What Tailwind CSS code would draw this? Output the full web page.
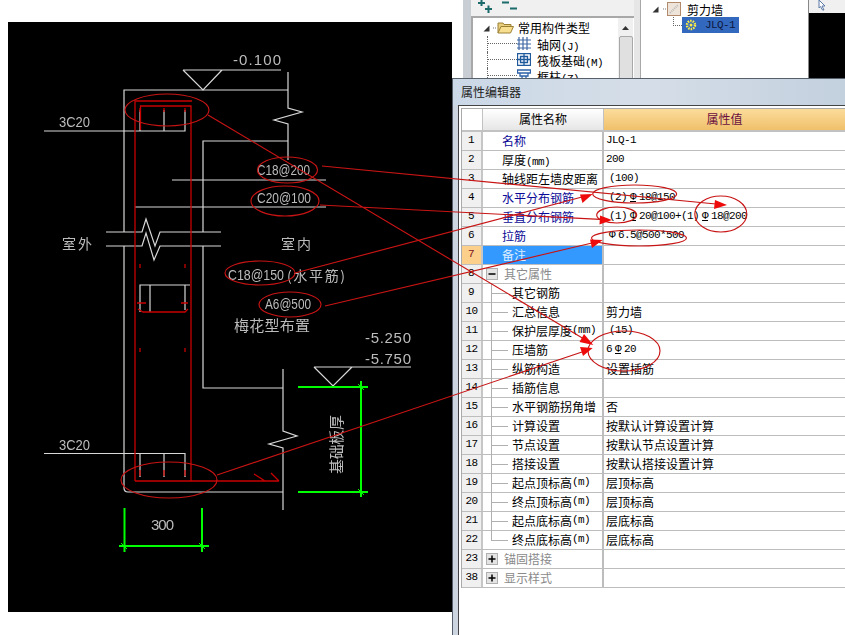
<!DOCTYPE html>
<html lang="zh">
<head>
<meta charset="utf-8">
<script src="https://cdn.jsdelivr.net/npm/@tailwindcss/browser@4"></script>
<title>属性编辑器</title>
</head>
<body class="relative w-[845px] h-[635px] overflow-hidden bg-white font-['Noto_Sans_CJK_SC','Liberation_Sans',sans-serif] text-[12px] leading-[17px] text-black">

<!-- CAD drawing -->
<svg class="absolute left-0 top-0 blur-[0.3px]" width="452" height="635" viewBox="0 0 452 635" fill="none">
  <rect x="8" y="22" width="444" height="590" fill="#000"/>
  <g stroke="#d8d8d8" stroke-width="1.2">
    <path d="M183 70H281M183 70L203 90L222 70"/>
    <path d="M288 72V108L302 112L274 120L288 124V160"/>
    <path d="M124 232V90H288"/>
    <path d="M124 246V488Q124 492 128 492H283"/>
    <path d="M288 141H203V232M203 246V388H283"/>
    <path d="M283 369V431L297 436L269 444L283 448V510"/>
    <path d="M106 232H142L146 219L155 246L160 232H221"/>
    <path d="M106 246H142L146 233L154 260L160 246H221"/>
    <path d="M172 180H326M135 207H326"/>
    <path d="M44 131H185V110M140 131V110M164 131V110"/>
    <path d="M44 453.500H185V477M140 453.500V477M164 453.500V477"/>
    <path d="M140 312V285H190M150 285V312M185 285V310"/>
    <path d="M314 367H411M314 367L333 386L352 367"/>
  </g>
  <g stroke="#c80000" stroke-width="1.300">
    <path d="M135 481V101H192M140.500 130V106H191V481M135 481H279M254 474L265 481M271 473L279 481"/>
    <path d="M138 309L143 312H185L188 309M137 303H146M181 303H188"/>
    <path d="M140 264V268M185 264V268M140 348V352M185 348V352M140 108V112M164 108V112M185 108V112M140 470V476M164 470V476M185 470V476"/>
  </g>
  <g stroke="#00ff00" stroke-width="2">
    <path d="M298 387H368M298 492H368M361 381V497"/>
    <path d="M124.500 508V552M202 508V552M119 546H209"/>
    <path d="M358 384L364 390M358 489L364 495M121 543L127 549M199 543L205 549" stroke-width="1"/>
  </g>
  <g fill="#bcbcbc" font-family="'Liberation Sans','Noto Sans CJK SC',sans-serif" font-size="15">
    <text x="233" y="65" textLength="48">-0.100</text>
    <text x="59" y="127" textLength="31" lengthAdjust="spacingAndGlyphs">3C20</text>
    <text x="59" y="450" textLength="31" lengthAdjust="spacingAndGlyphs">3C20</text>
    <text x="257" y="175" textLength="53" lengthAdjust="spacingAndGlyphs">C18@200</text>
    <text x="257" y="203" textLength="54" lengthAdjust="spacingAndGlyphs">C20@100</text>
    <text x="228" y="280" textLength="56" lengthAdjust="spacingAndGlyphs">C18@150</text>
    <text x="287" y="281" font-size="14" font-family="'Noto Sans CJK SC',sans-serif" textLength="58">(水平筋)</text>
    <text x="265" y="309" textLength="46" lengthAdjust="spacingAndGlyphs">A6@500</text>
    <text x="62" y="249" font-size="14" letter-spacing="2" font-family="'Noto Sans CJK SC',sans-serif">室外</text>
    <text x="281" y="249" font-size="14" letter-spacing="2" font-family="'Noto Sans CJK SC',sans-serif">室内</text>
    <text x="234" y="331" font-size="15" font-family="'Noto Sans CJK SC',sans-serif" textLength="76">梅花型布置</text>
    <text x="365" y="343" textLength="46">-5.250</text>
    <text x="365" y="364" textLength="46">-5.750</text>
    <text x="151" y="530" textLength="23">300</text>
    <text transform="translate(342 474) rotate(-90)" font-size="15" font-family="'Noto Sans CJK SC',sans-serif" textLength="59">基础板厚</text>
  </g>
</svg>

<!-- background tree windows -->
<div class="absolute left-[463px] top-0 w-[382px] h-[80px] flex bg-[#e6e6e6]">
  <div class="w-[171px] h-full flex flex-col border-l-[8px] border-[#c9ced4]">
    <div class="h-[18px] bg-[#f0f0f0] border-b-2 border-[#a8a8a8] flex items-start pl-[6px] gap-[7px]">
      <svg width="17" height="14" viewBox="0 0 17 14" fill="none" stroke="#1b6b6b" stroke-width="2"><path d="M1 3H8M4.500 0V6M8 9H15M11.500 5.500V13"/></svg>
      <svg width="17" height="14" viewBox="0 0 17 14" fill="none" stroke="#1b6b6b" stroke-width="2"><path d="M1 2.500H8M9 8.500H16"/></svg>
    </div>
    <div class="flex-1 flex bg-white border-l-2 border-[#a8a8a8] overflow-hidden">
      <div class="flex-1 flex flex-col pt-[1px] pl-[10px]">
        <div class="flex items-center h-[17px]">
          <svg width="7" height="7" viewBox="0 0 7 7" class="mr-[3px] mt-[2px]"><path d="M6.500 0.500V6.500H0.500Z" fill="#333"/></svg>
          <svg width="3" height="2" class="mr-[1px]"><path d="M0 1H3" stroke="#777" stroke-dasharray="1 1"/></svg>
          <svg width="17" height="13" viewBox="0 0 17 13" class="mr-[4px]"><path d="M1 12V2H6L7 3.500H14V6" fill="#e8cf7e" stroke="#9c8034"/><path d="M1 12L4 5.500H16.500L13.500 12Z" fill="#f8df90" stroke="#9c8034"/></svg>
          <span>常用构件类型</span>
        </div>
        <div class="flex h-[16px] pl-[4px]">
          <div class="w-[30px] h-[16px] border-l border-dotted border-[#666]"><div class="h-[8px] border-b border-dotted border-[#666]"></div></div>
          <svg width="14" height="13" viewBox="0 0 14 13" class="mr-[6px] mt-[1px]" fill="none" stroke="#3f67a6" stroke-width="1.200"><path d="M2 0V13M6 0V13M10 0V13M0 3H14M0 7H14M0 11H14"/></svg>
          <span>轴网<span class="font-['Liberation_Mono'] text-[11px] tracking-[-0.6px]">(J)</span></span>
        </div>
        <div class="flex h-[16px] pl-[4px]">
          <div class="w-[30px] h-[16px] border-l border-dotted border-[#666]"><div class="h-[8px] border-b border-dotted border-[#666]"></div></div>
          <svg width="14" height="13" viewBox="0 0 14 13" class="mr-[6px] mt-[1px]" fill="none" stroke="#1f5a9c" stroke-width="1.300"><path d="M0.500 0.500H13.500V12.500H0.500ZM3.500 3.500H10.500V9.500H3.500ZM0.500 6.500H13.500M7 0.500V12.500"/></svg>
          <span>筏板基础<span class="font-['Liberation_Mono'] text-[11px] tracking-[-0.6px]">(M)</span></span>
        </div>
        <div class="flex h-[16px] pl-[4px]">
          <div class="w-[30px] h-[16px] border-l border-dotted border-[#666]"><div class="h-[8px] border-b border-dotted border-[#666]"></div></div>
          <svg width="14" height="13" viewBox="0 0 14 13" class="mr-[6px] mt-[1px]" fill="none" stroke="#2d62a8" stroke-width="1.300"><path d="M0.500 1H13.500V4H0.500ZM3 4V7H11V4M5 7V13M9 7V13"/></svg>
          <span>框柱<span class="font-['Liberation_Mono'] text-[11px] tracking-[-0.6px]">(Z)</span></span>
        </div>
      </div>
      <div class="w-[15px] h-full bg-[#f0f0f0] flex flex-col items-center pt-[8px] gap-[6px] mr-[1px]">
        <svg width="7" height="4" viewBox="0 0 7 4"><path d="M0 4H7L3.500 0Z" fill="#333"/></svg>
        <div class="w-[14px] flex-1 bg-[#e0e0e0] border border-[#a8a8a8] rounded-[2px]"></div>
      </div>
    </div>
  </div>
  <div class="w-[6px] h-full"></div>
  <div class="w-[168px] h-full bg-white border-l border-[#a8a8a8] pl-[11px] pt-0 flex flex-col">
    <div class="flex items-center h-[17px] pt-[1px]">
      <svg width="7" height="7" viewBox="0 0 7 7" class="mr-[4px]"><path d="M6.500 0.500V6.500H0.500Z" fill="#333"/></svg>
      <svg width="3" height="2" class="mr-[1px]"><path d="M0 1H3" stroke="#777" stroke-dasharray="1 1"/></svg>
      <svg width="15" height="14" viewBox="0 0 15 14" class="mr-[5px]"><rect x="0.500" y="0.500" width="13" height="13" fill="#eee4da" stroke="#b08a6a"/><path d="M3 11L11 3" stroke="#bbb" stroke-width="2" stroke-dasharray="1 1"/></svg>
      <span class="text-[12px]">剪力墙</span>
    </div>
    <div class="flex h-[16px] ml-[21px]">
      <div class="w-[9px] h-[9px] border-l border-b border-dotted border-[#666]"></div>
      <div class="flex items-center w-[57px] bg-[#3268bd]">
        <svg width="12" height="12" viewBox="0 0 12 12" class="ml-[3px] mr-[8px]"><circle cx="6" cy="6" r="4" fill="none" stroke="#ffee44" stroke-width="2.500" stroke-dasharray="1.500 1"/><circle cx="6" cy="6" r="1.500" fill="#ffee44"/></svg>
        <span class="font-['Liberation_Mono'] text-[11px] tracking-[-0.6px] text-[#0d1840]">JLQ-1</span>
      </div>
    </div>
  </div>
  <div class="flex-1 h-full flex flex-col border-l border-[#888]">
    <div class="h-[13px] bg-[#f0f0f0] flex items-start pl-[8px]">
      <svg width="10" height="11" viewBox="0 0 10 11"><path d="M2 0L8 6H5L7 10H5.500L3.500 6.500L2 8Z" fill="#fff" stroke="#5c7ba8"/></svg>
    </div>
    <div class="flex-1 bg-black"></div>
  </div>
</div>

<!-- property editor window -->
<div class="absolute left-[452px] top-[78px] w-[393px] h-[557px] flex flex-col bg-white border-l border-t border-[#55606a]">
  <div class="h-[26px] shrink-0 flex items-center pl-[8px] pb-[2px] bg-gradient-to-r from-[#cbd8e7] via-[#d5dee8] to-[#c3d0de] text-[#222]">属性编辑器</div>
  <div class="flex-1 flex bg-[#cdd6e0] pl-[5px]">
    <div class="flex-1 flex flex-col bg-white border-l border-t border-[#444] pl-[2px] pt-[2px]">
      <div class="border-l border-t border-[#aaa] flex flex-col">
        <div class="flex h-[23px] border-b-2 border-[#c2c2c2]">
          <div class="w-[21px] bg-white border-r border-[#c2c2c2]"></div>
          <div class="w-[121px] text-center bg-gradient-to-b from-white to-[#e6e6e6] border-r border-[#c2c2c2] leading-[19px]">属性名称</div>
          <div class="flex-1 text-center bg-gradient-to-b from-[#fbdc9b] to-[#f0c06a] text-[#6a1040] leading-[19px]">属性值</div>
        </div>
        <div class="flex h-[19px] border-b border-[#bdbdbd]"><div class="w-[21px] text-center bg-[#f0f0f0] border-r-2 border-[#c6c6c6] font-['Liberation_Mono'] text-[11px] tracking-[-0.6px] pr-[1px]">1</div><div class="w-[121px] pl-[19px] border-r-2 border-[#bdbdbd] text-[#0a0a96]">名称</div><div class="flex-1 pl-[2px] font-['Liberation_Mono'] text-[11px] tracking-[-0.6px]">JLQ-1</div></div>
        <div class="flex h-[19px] border-b border-[#bdbdbd]"><div class="w-[21px] text-center bg-[#f0f0f0] border-r-2 border-[#c6c6c6] font-['Liberation_Mono'] text-[11px] tracking-[-0.6px] pr-[1px]">2</div><div class="w-[121px] pl-[19px] border-r-2 border-[#bdbdbd]">厚度<span class="font-['Liberation_Mono'] text-[11px] tracking-[-0.6px]">(mm)</span></div><div class="flex-1 pl-[2px] font-['Liberation_Mono'] text-[11px] tracking-[-0.6px]">200</div></div>
        <div class="flex h-[19px] border-b border-[#bdbdbd]"><div class="w-[21px] text-center bg-[#f0f0f0] border-r-2 border-[#c6c6c6] font-['Liberation_Mono'] text-[11px] tracking-[-0.6px] pr-[1px]">3</div><div class="w-[121px] pl-[19px] border-r-2 border-[#bdbdbd]">轴线距左墙皮距离</div><div class="flex-1 pl-[5px] font-['Liberation_Mono'] text-[11px] tracking-[-0.6px]">(100)</div></div>
        <div class="flex h-[19px] border-b border-[#bdbdbd]"><div class="w-[21px] text-center bg-[#f0f0f0] border-r-2 border-[#c6c6c6] font-['Liberation_Mono'] text-[11px] tracking-[-0.6px] pr-[1px]">4</div><div class="w-[121px] pl-[19px] border-r-2 border-[#bdbdbd] text-[#0a0a96]">水平分布钢筋</div><div class="flex-1 pl-[5px] font-['Liberation_Mono'] text-[11px] tracking-[-0.6px]">(2)<span class="inline-block w-[12px] text-center underline">Φ</span>18@150</div></div>
        <div class="flex h-[19px] border-b border-[#bdbdbd]"><div class="w-[21px] text-center bg-[#f0f0f0] border-r-2 border-[#c6c6c6] font-['Liberation_Mono'] text-[11px] tracking-[-0.6px] pr-[1px]">5</div><div class="w-[121px] pl-[19px] border-r-2 border-[#bdbdbd] text-[#0a0a96]">垂直分布钢筋</div><div class="flex-1 pl-[5px] font-['Liberation_Mono'] text-[11px] tracking-[-0.6px]">(1)<span class="inline-block w-[12px] text-center underline">Φ</span>20@100+(1)<span class="inline-block w-[12px] text-center underline">Φ</span>18@200</div></div>
        <div class="flex h-[19px] border-b border-[#bdbdbd]"><div class="w-[21px] text-center bg-[#f0f0f0] border-r-2 border-[#c6c6c6] font-['Liberation_Mono'] text-[11px] tracking-[-0.6px] pr-[1px]">6</div><div class="w-[121px] pl-[19px] border-r-2 border-[#bdbdbd] text-[#0a0a96]">拉筋</div><div class="flex-1 pl-[2px] font-['Liberation_Mono'] text-[11px] tracking-[-0.6px]"><span class="inline-block w-[12px] text-center">Φ</span>6.5@500*500</div></div>
        <div class="flex h-[19px] border-b border-[#bdbdbd]"><div class="w-[21px] text-center bg-[#fcd08a] border-r-2 border-[#c6c6c6] text-[#7a1020] font-['Liberation_Mono'] text-[11px] tracking-[-0.6px] pr-[1px]">7</div><div class="w-[121px] pl-[19px] border-r-2 border-[#bdbdbd] bg-[#3399ff] text-[#dfeeff]">备注</div><div class="flex-1"></div></div>
        <div class="flex h-[19px] border-b border-[#bdbdbd]"><div class="w-[21px] text-center bg-[#f0f0f0] border-r-2 border-[#c6c6c6] font-['Liberation_Mono'] text-[11px] tracking-[-0.6px] pr-[1px]">8</div><div class="w-[121px] pl-[3px] flex items-start pt-[1px] gap-[6px] border-r-2 border-[#bdbdbd] text-[#8a8a8a]"><svg class="mt-[2px]" width="12" height="12" viewBox="0 0 12 12" fill="none"><rect x="0.500" y="0.500" width="11" height="11" fill="#e4e4e4" stroke="#b0b0b0"/><path d="M2.500 6H9.500" stroke="#000" stroke-width="1.500"/></svg><span class="-mt-[1px]">其它属性</span></div><div class="flex-1"></div></div>
        <div class="flex h-[19px] border-b border-[#bdbdbd]"><div class="w-[21px] text-center bg-[#f0f0f0] border-r-2 border-[#c6c6c6] font-['Liberation_Mono'] text-[11px] tracking-[-0.6px] pr-[1px]">9</div><div class="w-[121px] flex border-r-2 border-[#bdbdbd]"><div class="ml-[8px] w-[17px] h-[19px] border-l border-[#b0b0b0] mr-[4px]"><div class="h-[10px] border-b border-[#b0b0b0]"></div></div>其它钢筋</div><div class="flex-1"></div></div>
        <div class="flex h-[19px] border-b border-[#bdbdbd]"><div class="w-[21px] text-center bg-[#f0f0f0] border-r-2 border-[#c6c6c6] font-['Liberation_Mono'] text-[11px] tracking-[-0.6px]">10</div><div class="w-[121px] flex border-r-2 border-[#bdbdbd]"><div class="ml-[8px] w-[17px] h-[19px] border-l border-[#b0b0b0] mr-[4px]"><div class="h-[10px] border-b border-[#b0b0b0]"></div></div>汇总信息</div><div class="flex-1 pl-[2px]">剪力墙</div></div>
        <div class="flex h-[19px] border-b border-[#bdbdbd]"><div class="w-[21px] text-center bg-[#f0f0f0] border-r-2 border-[#c6c6c6] font-['Liberation_Mono'] text-[11px] tracking-[-0.6px]">11</div><div class="w-[121px] flex border-r-2 border-[#bdbdbd]"><div class="ml-[8px] w-[17px] h-[19px] border-l border-[#b0b0b0] mr-[4px]"><div class="h-[10px] border-b border-[#b0b0b0]"></div></div>保护层厚度<span class="font-['Liberation_Mono'] text-[11px] tracking-[-0.6px]">(mm)</span></div><div class="flex-1 pl-[5px] font-['Liberation_Mono'] text-[11px] tracking-[-0.6px]">(15)</div></div>
        <div class="flex h-[19px] border-b border-[#bdbdbd]"><div class="w-[21px] text-center bg-[#f0f0f0] border-r-2 border-[#c6c6c6] font-['Liberation_Mono'] text-[11px] tracking-[-0.6px]">12</div><div class="w-[121px] flex border-r-2 border-[#bdbdbd]"><div class="ml-[8px] w-[17px] h-[19px] border-l border-[#b0b0b0] mr-[4px]"><div class="h-[10px] border-b border-[#b0b0b0]"></div></div>压墙筋</div><div class="flex-1 pl-[2px] font-['Liberation_Mono'] text-[11px] tracking-[-0.6px]">6<span class="inline-block w-[12px] text-center underline">Φ</span>20</div></div>
        <div class="flex h-[19px] border-b border-[#bdbdbd]"><div class="w-[21px] text-center bg-[#f0f0f0] border-r-2 border-[#c6c6c6] font-['Liberation_Mono'] text-[11px] tracking-[-0.6px]">13</div><div class="w-[121px] flex border-r-2 border-[#bdbdbd]"><div class="ml-[8px] w-[17px] h-[19px] border-l border-[#b0b0b0] mr-[4px]"><div class="h-[10px] border-b border-[#b0b0b0]"></div></div>纵筋构造</div><div class="flex-1 pl-[2px]">设置插筋</div></div>
        <div class="flex h-[19px] border-b border-[#bdbdbd]"><div class="w-[21px] text-center bg-[#f0f0f0] border-r-2 border-[#c6c6c6] font-['Liberation_Mono'] text-[11px] tracking-[-0.6px]">14</div><div class="w-[121px] flex border-r-2 border-[#bdbdbd]"><div class="ml-[8px] w-[17px] h-[19px] border-l border-[#b0b0b0] mr-[4px]"><div class="h-[10px] border-b border-[#b0b0b0]"></div></div>插筋信息</div><div class="flex-1"></div></div>
        <div class="flex h-[19px] border-b border-[#bdbdbd]"><div class="w-[21px] text-center bg-[#f0f0f0] border-r-2 border-[#c6c6c6] font-['Liberation_Mono'] text-[11px] tracking-[-0.6px]">15</div><div class="w-[121px] flex border-r-2 border-[#bdbdbd]"><div class="ml-[8px] w-[17px] h-[19px] border-l border-[#b0b0b0] mr-[4px]"><div class="h-[10px] border-b border-[#b0b0b0]"></div></div>水平钢筋拐角增</div><div class="flex-1 pl-[2px]">否</div></div>
        <div class="flex h-[19px] border-b border-[#bdbdbd]"><div class="w-[21px] text-center bg-[#f0f0f0] border-r-2 border-[#c6c6c6] font-['Liberation_Mono'] text-[11px] tracking-[-0.6px]">16</div><div class="w-[121px] flex border-r-2 border-[#bdbdbd]"><div class="ml-[8px] w-[17px] h-[19px] border-l border-[#b0b0b0] mr-[4px]"><div class="h-[10px] border-b border-[#b0b0b0]"></div></div>计算设置</div><div class="flex-1 pl-[2px]">按默认计算设置计算</div></div>
        <div class="flex h-[19px] border-b border-[#bdbdbd]"><div class="w-[21px] text-center bg-[#f0f0f0] border-r-2 border-[#c6c6c6] font-['Liberation_Mono'] text-[11px] tracking-[-0.6px]">17</div><div class="w-[121px] flex border-r-2 border-[#bdbdbd]"><div class="ml-[8px] w-[17px] h-[19px] border-l border-[#b0b0b0] mr-[4px]"><div class="h-[10px] border-b border-[#b0b0b0]"></div></div>节点设置</div><div class="flex-1 pl-[2px]">按默认节点设置计算</div></div>
        <div class="flex h-[19px] border-b border-[#bdbdbd]"><div class="w-[21px] text-center bg-[#f0f0f0] border-r-2 border-[#c6c6c6] font-['Liberation_Mono'] text-[11px] tracking-[-0.6px]">18</div><div class="w-[121px] flex border-r-2 border-[#bdbdbd]"><div class="ml-[8px] w-[17px] h-[19px] border-l border-[#b0b0b0] mr-[4px]"><div class="h-[10px] border-b border-[#b0b0b0]"></div></div>搭接设置</div><div class="flex-1 pl-[2px]">按默认搭接设置计算</div></div>
        <div class="flex h-[19px] border-b border-[#bdbdbd]"><div class="w-[21px] text-center bg-[#f0f0f0] border-r-2 border-[#c6c6c6] font-['Liberation_Mono'] text-[11px] tracking-[-0.6px]">19</div><div class="w-[121px] flex border-r-2 border-[#bdbdbd]"><div class="ml-[8px] w-[17px] h-[19px] border-l border-[#b0b0b0] mr-[4px]"><div class="h-[10px] border-b border-[#b0b0b0]"></div></div>起点顶标高<span class="font-['Liberation_Mono'] text-[11px] tracking-[-0.6px]">(m)</span></div><div class="flex-1 pl-[2px]">层顶标高</div></div>
        <div class="flex h-[19px] border-b border-[#bdbdbd]"><div class="w-[21px] text-center bg-[#f0f0f0] border-r-2 border-[#c6c6c6] font-['Liberation_Mono'] text-[11px] tracking-[-0.6px]">20</div><div class="w-[121px] flex border-r-2 border-[#bdbdbd]"><div class="ml-[8px] w-[17px] h-[19px] border-l border-[#b0b0b0] mr-[4px]"><div class="h-[10px] border-b border-[#b0b0b0]"></div></div>终点顶标高<span class="font-['Liberation_Mono'] text-[11px] tracking-[-0.6px]">(m)</span></div><div class="flex-1 pl-[2px]">层顶标高</div></div>
        <div class="flex h-[19px] border-b border-[#bdbdbd]"><div class="w-[21px] text-center bg-[#f0f0f0] border-r-2 border-[#c6c6c6] font-['Liberation_Mono'] text-[11px] tracking-[-0.6px]">21</div><div class="w-[121px] flex border-r-2 border-[#bdbdbd]"><div class="ml-[8px] w-[17px] h-[19px] border-l border-[#b0b0b0] mr-[4px]"><div class="h-[10px] border-b border-[#b0b0b0]"></div></div>起点底标高<span class="font-['Liberation_Mono'] text-[11px] tracking-[-0.6px]">(m)</span></div><div class="flex-1 pl-[2px]">层底标高</div></div>
        <div class="flex h-[19px] border-b border-[#bdbdbd]"><div class="w-[21px] text-center bg-[#f0f0f0] border-r-2 border-[#c6c6c6] font-['Liberation_Mono'] text-[11px] tracking-[-0.6px]">22</div><div class="w-[121px] flex border-r-2 border-[#bdbdbd]"><div class="ml-[8px] w-[17px] h-[10px] border-l border-b border-[#b0b0b0] mr-[4px]"></div>终点底标高<span class="font-['Liberation_Mono'] text-[11px] tracking-[-0.6px]">(m)</span></div><div class="flex-1 pl-[2px]">层底标高</div></div>
        <div class="flex h-[19px] border-b border-[#bdbdbd]"><div class="w-[21px] text-center bg-[#f0f0f0] border-r-2 border-[#c6c6c6] font-['Liberation_Mono'] text-[11px] tracking-[-0.6px]">23</div><div class="w-[121px] pl-[3px] flex items-start pt-[1px] gap-[6px] border-r-2 border-[#bdbdbd] text-[#8a8a8a]"><svg class="mt-[2px]" width="12" height="12" viewBox="0 0 12 12" fill="none"><rect x="0.500" y="0.500" width="11" height="11" fill="#e4e4e4" stroke="#b0b0b0"/><path d="M2.500 6H9.500M6 2.500V9.500" stroke="#000" stroke-width="1.500"/></svg><span class="-mt-[1px]">锚固搭接</span></div><div class="flex-1"></div></div>
        <div class="flex h-[19px] border-b border-[#bdbdbd]"><div class="w-[21px] text-center bg-[#f0f0f0] border-r-2 border-[#c6c6c6] font-['Liberation_Mono'] text-[11px] tracking-[-0.6px]">38</div><div class="w-[121px] pl-[3px] flex items-start pt-[1px] gap-[6px] border-r-2 border-[#bdbdbd] text-[#8a8a8a]"><svg class="mt-[2px]" width="12" height="12" viewBox="0 0 12 12" fill="none"><rect x="0.500" y="0.500" width="11" height="11" fill="#e4e4e4" stroke="#b0b0b0"/><path d="M2.500 6H9.500M6 2.500V9.500" stroke="#000" stroke-width="1.500"/></svg><span class="-mt-[1px]">显示样式</span></div><div class="flex-1"></div></div>
      </div>
    </div>
  </div>
</div>

<!-- red annotations over everything -->
<svg class="absolute left-0 top-0 pointer-events-none" width="845" height="635" viewBox="0 0 845 635" fill="none">
  <g stroke="#c81414" stroke-width="1.150">
    <ellipse cx="167" cy="110" rx="42" ry="16"/>
    <ellipse cx="287.500" cy="170" rx="30" ry="13"/>
    <ellipse cx="285" cy="201" rx="34" ry="15"/>
    <ellipse cx="260" cy="273" rx="35" ry="12"/>
    <ellipse cx="290" cy="304.500" rx="31" ry="12.500"/>
    <ellipse cx="169" cy="480" rx="48" ry="18"/>
    <ellipse cx="634.700" cy="194" rx="42" ry="9"/>
    <ellipse cx="616.700" cy="215" rx="20" ry="8"/>
    <ellipse cx="720.800" cy="214" rx="26" ry="18"/>
    <ellipse cx="639" cy="238" rx="47.500" ry="8"/>
    <ellipse cx="624" cy="351" rx="36" ry="20"/>
    <path d="M322 166L716 204M320 205L600 219.400M295 273L582 197M325 306L592 243M208 115L584 339M217 475L582 352"/>
  </g>
  <g fill="#ee0a0a">
    <path d="M727 205L715 200L714 209Z"/>
    <path d="M612 220L600 215.500L599.500 224.500Z"/>
    <path d="M592.700 194L580 194.500L582.500 203Z"/>
    <path d="M602.700 240L590 239.500L592 248Z"/>
    <path d="M593.300 345L584 334L579.500 342Z"/>
    <path d="M592.700 348L580 347L583 356Z"/>
  </g>
</svg>
</body>
</html>
